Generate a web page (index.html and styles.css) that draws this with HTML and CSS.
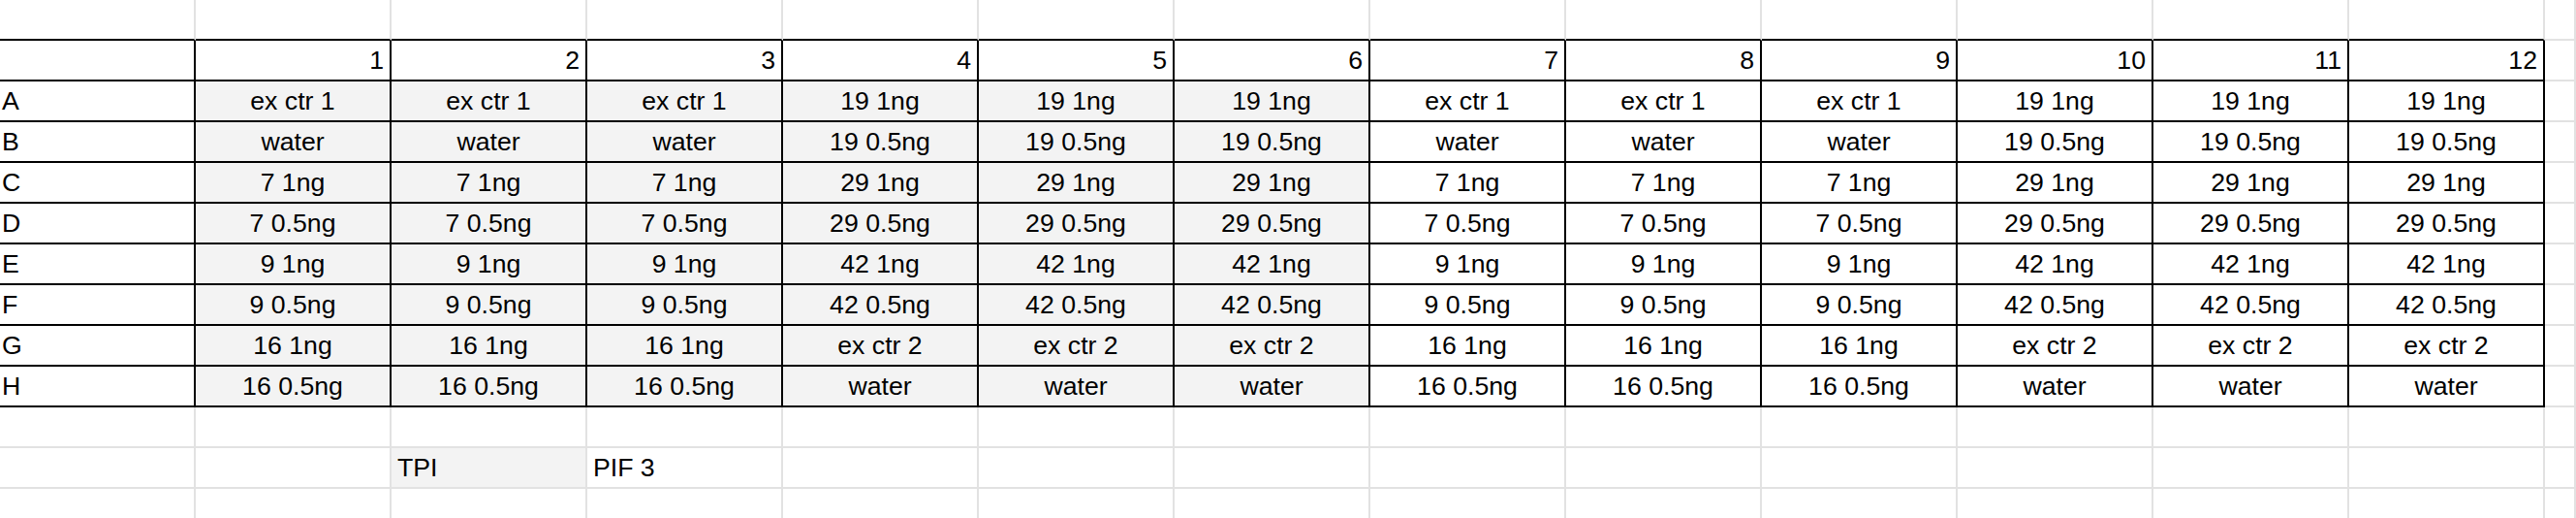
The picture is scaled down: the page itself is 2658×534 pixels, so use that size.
FILE: index.html
```html
<!DOCTYPE html>
<html>
<head>
<meta charset="utf-8">
<link rel="stylesheet" href="styles.css">
</head>
<body>
<div class="sheet">
  <div class="row">
    <div class="c tb"></div><div class="c tb"></div><div class="c tb"></div><div class="c tb"></div><div class="c tb"></div><div class="c tb"></div><div class="c tb"></div><div class="c tb"></div><div class="c tb"></div><div class="c tb"></div><div class="c tb"></div><div class="c tb"></div><div class="c tb"></div><div class="c"></div>
  </div>
  <div class="row">
    <div class="c t lbl"></div>
    <div class="c t num">1</div><div class="c t num">2</div><div class="c t num">3</div><div class="c t num">4</div><div class="c t num">5</div><div class="c t num">6</div><div class="c t num">7</div><div class="c t num">8</div><div class="c t num">9</div><div class="c t num">10</div><div class="c t num">11</div><div class="c t num">12</div>
    <div class="c"></div>
  </div>
  <div class="row">
    <div class="c t lbl">A</div>
    <div class="c t g ctr">ex ctr 1</div><div class="c t g ctr">ex ctr 1</div><div class="c t g ctr">ex ctr 1</div><div class="c t g ctr">19 1ng</div><div class="c t g ctr">19 1ng</div><div class="c t g ctr">19 1ng</div>
    <div class="c t ctr">ex ctr 1</div><div class="c t ctr">ex ctr 1</div><div class="c t ctr">ex ctr 1</div><div class="c t ctr">19 1ng</div><div class="c t ctr">19 1ng</div><div class="c t ctr">19 1ng</div>
    <div class="c"></div>
  </div>
  <div class="row">
    <div class="c t lbl">B</div>
    <div class="c t g ctr">water</div><div class="c t g ctr">water</div><div class="c t g ctr">water</div><div class="c t g ctr">19 0.5ng</div><div class="c t g ctr">19 0.5ng</div><div class="c t g ctr">19 0.5ng</div>
    <div class="c t ctr">water</div><div class="c t ctr">water</div><div class="c t ctr">water</div><div class="c t ctr">19 0.5ng</div><div class="c t ctr">19 0.5ng</div><div class="c t ctr">19 0.5ng</div>
    <div class="c"></div>
  </div>
  <div class="row">
    <div class="c t lbl">C</div>
    <div class="c t g ctr">7 1ng</div><div class="c t g ctr">7 1ng</div><div class="c t g ctr">7 1ng</div><div class="c t g ctr">29 1ng</div><div class="c t g ctr">29 1ng</div><div class="c t g ctr">29 1ng</div>
    <div class="c t ctr">7 1ng</div><div class="c t ctr">7 1ng</div><div class="c t ctr">7 1ng</div><div class="c t ctr">29 1ng</div><div class="c t ctr">29 1ng</div><div class="c t ctr">29 1ng</div>
    <div class="c"></div>
  </div>
  <div class="row">
    <div class="c t lbl">D</div>
    <div class="c t g ctr">7 0.5ng</div><div class="c t g ctr">7 0.5ng</div><div class="c t g ctr">7 0.5ng</div><div class="c t g ctr">29 0.5ng</div><div class="c t g ctr">29 0.5ng</div><div class="c t g ctr">29 0.5ng</div>
    <div class="c t ctr">7 0.5ng</div><div class="c t ctr">7 0.5ng</div><div class="c t ctr">7 0.5ng</div><div class="c t ctr">29 0.5ng</div><div class="c t ctr">29 0.5ng</div><div class="c t ctr">29 0.5ng</div>
    <div class="c"></div>
  </div>
  <div class="row">
    <div class="c t lbl">E</div>
    <div class="c t g ctr">9 1ng</div><div class="c t g ctr">9 1ng</div><div class="c t g ctr">9 1ng</div><div class="c t g ctr">42 1ng</div><div class="c t g ctr">42 1ng</div><div class="c t g ctr">42 1ng</div>
    <div class="c t ctr">9 1ng</div><div class="c t ctr">9 1ng</div><div class="c t ctr">9 1ng</div><div class="c t ctr">42 1ng</div><div class="c t ctr">42 1ng</div><div class="c t ctr">42 1ng</div>
    <div class="c"></div>
  </div>
  <div class="row">
    <div class="c t lbl">F</div>
    <div class="c t g ctr">9 0.5ng</div><div class="c t g ctr">9 0.5ng</div><div class="c t g ctr">9 0.5ng</div><div class="c t g ctr">42 0.5ng</div><div class="c t g ctr">42 0.5ng</div><div class="c t g ctr">42 0.5ng</div>
    <div class="c t ctr">9 0.5ng</div><div class="c t ctr">9 0.5ng</div><div class="c t ctr">9 0.5ng</div><div class="c t ctr">42 0.5ng</div><div class="c t ctr">42 0.5ng</div><div class="c t ctr">42 0.5ng</div>
    <div class="c"></div>
  </div>
  <div class="row">
    <div class="c t lbl">G</div>
    <div class="c t g ctr">16 1ng</div><div class="c t g ctr">16 1ng</div><div class="c t g ctr">16 1ng</div><div class="c t g ctr">ex ctr 2</div><div class="c t g ctr">ex ctr 2</div><div class="c t g ctr">ex ctr 2</div>
    <div class="c t ctr">16 1ng</div><div class="c t ctr">16 1ng</div><div class="c t ctr">16 1ng</div><div class="c t ctr">ex ctr 2</div><div class="c t ctr">ex ctr 2</div><div class="c t ctr">ex ctr 2</div>
    <div class="c"></div>
  </div>
  <div class="row">
    <div class="c t lbl">H</div>
    <div class="c t g ctr">16 0.5ng</div><div class="c t g ctr">16 0.5ng</div><div class="c t g ctr">16 0.5ng</div><div class="c t g ctr">water</div><div class="c t g ctr">water</div><div class="c t g ctr">water</div>
    <div class="c t ctr">16 0.5ng</div><div class="c t ctr">16 0.5ng</div><div class="c t ctr">16 0.5ng</div><div class="c t ctr">water</div><div class="c t ctr">water</div><div class="c t ctr">water</div>
    <div class="c"></div>
  </div>
  <div class="row">
    <div class="c"></div><div class="c"></div><div class="c"></div><div class="c"></div><div class="c"></div><div class="c"></div><div class="c"></div><div class="c"></div><div class="c"></div><div class="c"></div><div class="c"></div><div class="c"></div><div class="c"></div><div class="c"></div>
  </div>
  <div class="row">
    <div class="c"></div><div class="c"></div><div class="c g">TPI</div><div class="c">PIF 3</div><div class="c"></div><div class="c"></div><div class="c"></div><div class="c"></div><div class="c"></div><div class="c"></div><div class="c"></div><div class="c"></div><div class="c"></div><div class="c"></div>
  </div>
  <div class="row">
    <div class="c"></div><div class="c"></div><div class="c"></div><div class="c"></div><div class="c"></div><div class="c"></div><div class="c"></div><div class="c"></div><div class="c"></div><div class="c"></div><div class="c"></div><div class="c"></div><div class="c"></div><div class="c"></div>
  </div>
</div>
</body>
</html>
```

FILE: styles.css
```css
* { box-sizing: border-box; }
html, body {
  margin: 0;
  padding: 0;
  background: #ffffff;
  overflow: hidden;
}
.sheet {
  display: flex;
  flex-direction: column;
  width: 2658px;
  font-family: "Liberation Sans", Arial, sans-serif;
  font-size: 26.67px;
  color: #000000;
}
.row {
  display: grid;
  grid-template-columns: 202px repeat(12, 202px) 1fr;
  height: 42px;
}
.c {
  display: flex;
  align-items: flex-end;
  justify-content: flex-start;
  height: 42px;
  padding: 0 6px 5px 6px;
  line-height: 30px;
  white-space: nowrap;
  overflow: hidden;
  border-right: 2px solid #e2e2e2;
  border-bottom: 2px solid #e2e2e2;
  background: #ffffff;
}
.tb { border-bottom-color: #000000; }
.t {
  border-right-color: #000000;
  border-bottom-color: #000000;
}
.lbl { padding-left: 2px; }
.num { justify-content: flex-end; }
.ctr { justify-content: center; }
.g { background: #f3f3f3; }
```
